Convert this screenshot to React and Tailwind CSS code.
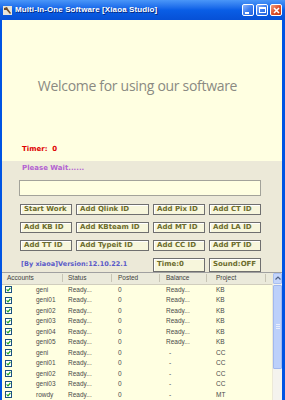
import React from "react";

const buttonRows = [
  ["Start Work", "Add Qlink ID", "Add Pix ID", "Add CT ID"],
  ["Add KB ID", "Add KBteam ID", "Add MT ID", "Add LA ID"],
  ["Add TT ID", "Add Typeit ID", "Add CC ID", "Add PT ID"],
];

const accounts = [
  { name: "geni", balance: "Ready...", project: "KB" },
  { name: "geni01", balance: "Ready...", project: "KB" },
  { name: "geni02", balance: "Ready...", project: "KB" },
  { name: "geni03", balance: "Ready...", project: "KB" },
  { name: "geni04", balance: "Ready...", project: "KB" },
  { name: "geni05", balance: "Ready...", project: "KB" },
  { name: "geni", balance: "-", project: "CC" },
  { name: "geni01", balance: "-", project: "CC" },
  { name: "geni02", balance: "-", project: "CC" },
  { name: "geni03", balance: "-", project: "CC" },
  { name: "rowdy", balance: "-", project: "MT" },
];

function TitleButton({ kind }) {
  const close = kind === "close";
  return (
    <div
      className={`w-[12px] h-[12px] rounded-[2px] border border-white flex items-center justify-center ${
        close
          ? "bg-linear-to-br from-[#f0a080] via-[#e0502a] to-[#c43a14]"
          : "bg-linear-to-br from-[#8fb5fb] via-[#3d7ef0] to-[#2160dc]"
      }`}
    >
      {kind === "min" && <div className="w-[4px] h-[2px] bg-white mt-[5px] mr-[2px]" />}
      {kind === "max" && <div className="w-[7px] h-[6px] border border-white border-t-2" />}
      {kind === "close" && (
        <svg width="7" height="7" viewBox="0 0 7 7">
          <path d="M1 1L6 6M6 1L1 6" stroke="white" strokeWidth="1.6" />
        </svg>
      )}
    </div>
  );
}

function Check() {
  return (
    <div className="w-[7px] h-[7px] border border-[#1c5180] bg-white flex items-center justify-center">
      <svg width="5" height="5" viewBox="0 0 5 5">
        <path d="M0.6 2.4L2 3.8L4.4 1" stroke="#21a121" strokeWidth="1.2" fill="none" />
      </svg>
    </div>
  );
}

function FlatButton({ children }) {
  return (
    <div className="h-[11px] border border-[#6f6f6f] bg-[#f7f6dc] pl-[3px] flex items-center text-[7px] font-bold text-[#6c6c2c] leading-none whitespace-nowrap shadow-[inset_1px_1px_0_#ffffff]">
      {children}
    </div>
  );
}

export default function App() {
  return (
    <div className="w-[285px] h-[400px] overflow-hidden bg-[#0054e3] flex flex-col font-['DejaVu_Sans',sans-serif]">
      {/* Title bar */}
      <div className="h-[20px] flex items-center bg-linear-to-b from-[#4a96f8] via-[#0a5ee6] to-[#0650d6] pl-[3px] pr-[3px]">
        <svg width="9" height="9" viewBox="0 0 9 9" className="mr-[3px]">
          <rect x="0" y="0" width="9" height="9" fill="#e8e4d8" />
          <path d="M1 2L4 1L5 3L8 7L7 8L3.5 4L1 4Z" fill="#6a4a2a" />
        </svg>
        <span className="text-white font-bold text-[8px] font-['Liberation_Sans',sans-serif] tracking-[0.1px] [text-shadow:1px_1px_0_#0a2a80]">
          Multi-In-One Software [Xiaoa Studio]
        </span>
        <div className="ml-auto flex gap-[2px]">
          <TitleButton kind="min" />
          <TitleButton kind="max" />
          <TitleButton kind="close" />
        </div>
      </div>

      <div className="flex-1 ml-[2px] mr-[3px] flex flex-col bg-[#ece9d8] overflow-hidden">
        {/* Welcome panel */}
        <div className="h-[142px] bg-[#ffffe1] flex flex-col">
          <div className="pt-[58px] pr-[9px] text-center text-[14px] leading-[16px] text-[#8a8a82] font-['Open_Sans',sans-serif] tracking-[-0.3px]">
            Welcome for using our software
          </div>
          <div className="mt-auto mb-[8px] pl-[20px] text-[7px] font-bold text-[#e00000] leading-none">
            Timer:&nbsp; 0
          </div>
        </div>

        {/* Controls */}
        <div className="h-[112px] flex flex-col">
          <div className="pt-[4px] pl-[20px] text-[7px] font-bold text-[#b462d2] leading-none">
            Please Wait......
          </div>
          <div className="mt-[8px] ml-[17px] w-[242px] h-[16px] border border-[#a3a39a] bg-[#ffffe1]" />
          <div className="mt-[8px] ml-[18px] grid grid-cols-[52px_73px_52px_52px] gap-x-[4px] gap-y-[7px]">
            {buttonRows.flat().map((label) => (
              <FlatButton key={label}>{label}</FlatButton>
            ))}
            <div className="col-span-2 flex items-center text-[6.5px] font-bold text-[#5a5ac8] leading-none pl-[1px]">
              [By xiaoa]Version:12.10.22.1
            </div>
            <div className="h-[14px] border border-[#6f6f6f] bg-[#f7f6dc] pl-[3px] pt-[2px] text-[7px] font-bold text-[#6c6c2c] leading-none shadow-[inset_1px_1px_0_#ffffff]">
              Time:0
            </div>
            <div className="h-[14px] border border-[#6f6f6f] bg-[#f7f6dc] pl-[3px] pt-[2px] text-[7px] font-bold text-[#6c6c2c] leading-none shadow-[inset_1px_1px_0_#ffffff]">
              Sound:OFF
            </div>
          </div>
        </div>

        {/* List view */}
        <div className="flex-1 flex bg-[#ffffe1] border-t border-[#a0a0a0] font-['Liberation_Sans',sans-serif] text-[6.5px] text-[#4a4a4a]">
          <div className="flex-1 flex flex-col">
            <div className="h-[12px] flex items-center bg-[#ebeadb] border-b border-[#d0cdbd] text-[#404040]">
              <div className="w-[61px] pl-[5px] border-r border-[#c8c5b5] h-[8px] flex items-center">Accounts</div>
              <div className="w-[49px] pl-[5px] border-r border-[#c8c5b5] h-[8px] flex items-center">Status</div>
              <div className="w-[48px] pl-[6px] border-r border-[#c8c5b5] h-[8px] flex items-center">Posted</div>
              <div className="w-[47px] pl-[6px] border-r border-[#c8c5b5] h-[8px] flex items-center">Balance</div>
              <div className="w-[59px] pl-[9px] border-r border-[#c8c5b5] h-[8px] flex items-center">Project</div>
            </div>
            {accounts.map((a, i) => (
              <div key={i} className="h-[10.5px] flex items-center shrink-0">
                <div className="w-[61px] pl-[3px] flex items-center">
                  <Check />
                  <span className="ml-[24px]">{a.name}</span>
                </div>
                <div className="w-[49px] pl-[5px]">Ready...</div>
                <div className="w-[48px] pl-[6px]">0</div>
                <div className={`w-[47px] ${a.balance === "-" ? "pl-[9px]" : "pl-[6px]"}`}>{a.balance}</div>
                <div className="w-[59px] pl-[9px]">{a.project}</div>
              </div>
            ))}
          </div>

          {/* Scrollbar */}
          <div className="w-[10px] flex flex-col bg-[#f4f3ee] border-l border-[#ece9d8]">
            <div className="h-[11px] bg-[#c4d5fb] border border-[#a8bff0] rounded-[1px] flex items-center justify-center">
              <svg width="6" height="4" viewBox="0 0 6 4">
                <path d="M0.5 3.5L3 1L5.5 3.5" stroke="#4d6185" strokeWidth="1.2" fill="none" />
              </svg>
            </div>
            <div className="h-[84px] mt-[1px] bg-[#bcd0fa] border border-[#a0b8ee] rounded-[1px] flex flex-col items-center justify-center gap-[1px]">
              <div className="w-[4px] h-[1px] bg-[#e8eefc]" />
              <div className="w-[4px] h-[1px] bg-[#e8eefc]" />
              <div className="w-[4px] h-[1px] bg-[#e8eefc]" />
            </div>
          </div>
        </div>
      </div>
    </div>
  );
}
